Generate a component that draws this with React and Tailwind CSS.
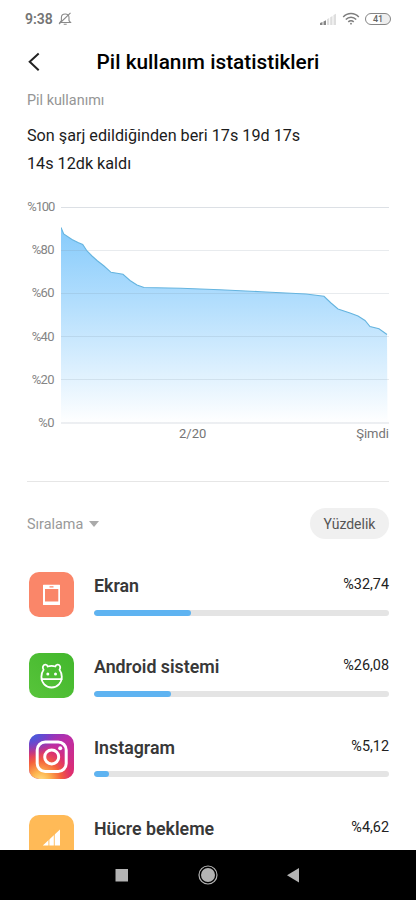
import React from "react";

const levels = ["%100", "%80", "%60", "%40", "%20", "%0"];

const linePoints =
  "0,20.5 2.7,27 11,32.5 17,35.5 21.7,37.5 26,44 31,49 36,53.5 43,59 50,65.3 62,67.3 69,73.5 76,78 83,80.5 120,81.3 159,82.7 200,84.7 245,87 263,89.3 270,96 277,102 289,106 297,109 304,113.5 309,119.5 318,121.7 326,127.5";

const ScreenIcon = () => (
  <svg viewBox="0 0 45 45" className="w-full h-full">
    <rect width="45" height="45" rx="10" fill="#fa8669" />
    <path
      fill="#fff"
      fillRule="evenodd"
      d="M14.5 12.7h16a.5.5 0 0 1 .5.5v19.200a.5.5 0 0 1-.5.5h-16a.5.500 0 0 1-.5-.5V13.200a.5.5 0 0 1 .5-.5zM16 17v12.5h13.3V17zM20.5 14.2v1.3h4v-1.3z"
    />
  </svg>
);

const AndroidIcon = () => (
  <svg viewBox="0 0 45 45" className="w-full h-full">
    <defs>
      <linearGradient id="green" x1="0" y1="1" x2="1" y2="0">
        <stop offset="0" stopColor="#58c43b" />
        <stop offset="1" stopColor="#42b72c" />
      </linearGradient>
    </defs>
    <rect width="45" height="45" rx="10" fill="url(#green)" />
    <g fill="none" stroke="#fff" strokeWidth="1.8" strokeLinecap="round" strokeLinejoin="round">
      <path d="M14.6 16.8c-1.600-2.300-.6-5 1.600-5.200 1.300-.1 2.200.6 2.500 1.900 2.500-.9 5.200-.9 7.700 0 .3-1.300 1.200-2 2.500-1.900 2.200.2 3.200 2.900 1.600 5.200 1.400 1.900 2.300 4.300 2.300 7 0 5.800-4.200 10.700-10.200 10.700s-10.200-4.900-10.200-10.700c0-2.700.8-5.100 2.200-7z" />
      <path d="M12.600 26.200h20" />
    </g>
    <circle cx="18.800" cy="20.900" r="1.500" fill="#fff" />
    <circle cx="26.500" cy="20.900" r="1.500" fill="#fff" />
  </svg>
);

const InstagramIcon = () => (
  <svg viewBox="0 0 45 45" className="w-full h-full">
    <defs>
      <linearGradient id="ig-base" x1="0.1" y1="0" x2="0.7" y2="1">
        <stop offset="0" stopColor="#6a3fd0" />
        <stop offset="0.4" stopColor="#bb2ea8" />
        <stop offset="1" stopColor="#dc2b73" />
      </linearGradient>
      <radialGradient id="ig-warm" cx="0.26" cy="1.05" r="0.92">
        <stop offset="0" stopColor="#ffe08a" />
        <stop offset="0.22" stopColor="#fdb650" />
        <stop offset="0.5" stopColor="#f4603b" />
        <stop offset="0.75" stopColor="#e0306a" stopOpacity="0.8" />
        <stop offset="1" stopColor="#c52d96" stopOpacity="0" />
      </radialGradient>
      <radialGradient id="ig-blue" cx="0.08" cy="0" r="0.5">
        <stop offset="0" stopColor="#4361dc" />
        <stop offset="1" stopColor="#5a49d8" stopOpacity="0" />
      </radialGradient>
    </defs>
    <rect width="45" height="45" rx="10" fill="url(#ig-base)" />
    <rect width="45" height="45" rx="10" fill="url(#ig-warm)" />
    <rect width="45" height="45" rx="10" fill="url(#ig-blue)" />
    <rect x="8.2" y="8" width="29" height="29.5" rx="8" fill="none" stroke="#fff" strokeWidth="3" />
    <circle cx="22.7" cy="22.9" r="7" fill="none" stroke="#fff" strokeWidth="3" />
    <circle cx="31.2" cy="14.2" r="2" fill="#fff" />
  </svg>
);

const CellIcon = () => (
  <svg viewBox="0 0 45 45" className="w-full h-full">
    <rect width="45" height="45" rx="10" fill="#ffba57" />
    <path fill="#fff" d="M13.8 30.5 31 14.5v16z" />
    <path stroke="#ffba57" strokeWidth="0.9" d="M19.9 14v17M25.3 14v17" />
  </svg>
);

const apps = [
  { name: "Ekran", percent: "%32,74", value: 32.74, icon: <ScreenIcon /> },
  { name: "Android sistemi", percent: "%26,08", value: 26.08, icon: <AndroidIcon /> },
  { name: "Instagram", percent: "%5,12", value: 5.12, icon: <InstagramIcon /> },
  { name: "Hücre bekleme", percent: "%4,62", value: 4.62, icon: <CellIcon /> },
];

function StatusBar() {
  return (
    <div className="h-9 shrink-0 flex items-center justify-between px-[25px] pt-[1px]">
      <div className="flex items-center gap-[5px]">
        <span className="text-[14px] leading-4 font-semibold text-[#757575]">9:38</span>
        <svg width="14" height="14" viewBox="0 0 14 14" fill="none" stroke="#8a8a8a" strokeWidth="1.1">
          <path d="M2 10.5h10.5L11 8.7V5.5C11 3.4 9.4 2 7.2 2S3.4 3.4 3.4 5.5v3.2z" />
          <path d="M5.7 12.3h3M1 12 12.500.8" />
        </svg>
      </div>
      <div className="flex items-center">
        <svg width="16" height="12" viewBox="0 0 16 12" className="mr-[6px]">
          <path fill="#858585" d="M0 12v-2l2.500-1v3zM3.500 12V8.500L6 7.200V12z" />
          <path fill="#dedede" d="M7 12V6.300L9.200 5v7zM10.200 12V4.300L12.500 3v9zM13.500 12V2L16 .8V12z" />
        </svg>
        <svg width="18" height="13" viewBox="0 0 18 13" fill="none" stroke="#7d7d7d" strokeWidth="1.5" className="mr-[5px]">
          <path d="M1.200 5c4.400-4.600 11.200-4.600 15.600 0M3.800 7.500c3-3.100 7.400-3.100 10.400 0M6.300 9.900c1.600-1.600 3.800-1.600 5.400 0" />
          <circle cx="9" cy="11.700" r="0.900" fill="#7d7d7d" stroke="none" />
        </svg>
        <div className="w-[26px] h-3 rounded-full border border-[#858585] bg-linear-to-r from-white from-60% to-[#eeeeee] to-60% flex items-center justify-center pt-px text-[9px] leading-none font-medium text-[#666]">
          41
        </div>
      </div>
    </div>
  );
}

function BatteryChart() {
  return (
    <div className="mt-[21px] pl-[20px] pr-[27px]">
      <div className="flex">
        <div className="w-[34px] h-[232px] flex flex-col justify-between text-right text-[13px] leading-4 tracking-[-0.6px] text-[#858585]">
          {levels.map((level) => (
            <span key={level} className="first:tracking-[-1.2px]">{level}</span>
          ))}
        </div>
        <svg width="328" height="218" viewBox="0 0 328 218" className="ml-[7px] mt-2">
          <defs>
            <linearGradient id="area" gradientUnits="userSpaceOnUse" x1="0" y1="20" x2="0" y2="216">
              <stop offset="0" stopColor="#86cbfb" />
              <stop offset="0.35" stopColor="#aedcfd" />
              <stop offset="0.75" stopColor="#dff1fe" />
              <stop offset="1" stopColor="#ffffff" />
            </linearGradient>
          </defs>
          <polygon points={`0,216 ${linePoints} 326.5,216`} fill="url(#area)" />
          {levels.map((level, i) => (
            <path
              key={level}
              d={`M0 ${[0.5, 43.5, 86.5, 129.5, 172.5, 216][i]}H328`}
              stroke="#78879b"
              strokeOpacity={i === 0 || i === 5 ? 0.26 : 0.17}
            />
          ))}
          <polyline points={linePoints} fill="none" stroke="#65b4df" strokeWidth="1.1" />
        </svg>
      </div>
      <div className="flex justify-between -mt-[5px] pl-[159px] text-[13px] leading-4 text-[#757575]">
        <span>2/20</span>
        <span>Şimdi</span>
      </div>
    </div>
  );
}

function AppRow({ app }) {
  return (
    <div className="h-[80.8px] shrink-0 flex pl-[28.5px] pr-[27px]">
      <div className="w-[45px] h-[45px] shrink-0">{app.icon}</div>
      <div className="flex-1 ml-[20.5px]">
        <div className="flex justify-between h-[37.5px]">
          <span className="pt-[4px] text-[17.8px] leading-5 font-semibold text-[#383838]">{app.name}</span>
          <span className="pt-[3px] text-[14.4px] leading-5 text-[#222]">{app.percent}</span>
        </div>
        <div className="h-[6px] rounded-full bg-[#e4e4e4] overflow-hidden">
          <div className="h-full rounded-full bg-[#5eb3f1]" style={{ width: `${app.value}%` }} />
        </div>
      </div>
    </div>
  );
}

export default function App() {
  return (
    <div className="w-[416px] h-[900px] overflow-hidden bg-white flex flex-col font-['Roboto',sans-serif]">
      <StatusBar />
      <header className="h-[52px] shrink-0 grid grid-cols-[80px_1fr_80px] items-center">
        <svg width="12" height="20" viewBox="0 0 12 20" fill="none" stroke="#222" strokeWidth="2" className="ml-[28px]">
          <path d="M10.7 1.500 1.700 9.800l9 8.500" />
        </svg>
        <h1 className="pt-[2px] text-center text-[20.8px] font-medium text-black whitespace-nowrap">Pil kullanım istatistikleri</h1>
      </header>

      <main className="flex-1 min-h-0 overflow-hidden flex flex-col">
        <p className="pl-[27px] mt-[3px] text-[14.4px] leading-5 text-[#959595]">Pil kullanımı</p>
        <p className="pl-[27px] mt-[11px] text-[16.2px] leading-7 text-[#1c1c1c]">
          Son şarj edildiğinden beri 17s 19d 17s
          <br />
          14s 12dk kaldı
        </p>

        <BatteryChart />

        <div className="mx-[27px] mt-[39px] h-px shrink-0 bg-[#e6e6e6]" />

        <div className="mt-[26px] h-[31px] shrink-0 px-[27px] flex items-center justify-between">
          <button className="pt-[2px] flex items-center gap-[6px] text-[14.4px] text-[#999]">
            Sıralama
            <svg width="10" height="6" viewBox="0 0 10 6">
              <path d="M0 0h10L5 6z" fill="#aaa" />
            </svg>
          </button>
          <button className="w-[79px] h-[31px] pt-px rounded-full bg-[#f0f0f0] text-[14px] text-[#555]">Yüzdelik</button>
        </div>

        <div className="mt-[33.300px]">
          {apps.map((app) => (
            <AppRow key={app.name} app={app} />
          ))}
        </div>
      </main>

      <nav className="h-[50px] shrink-0 bg-black flex items-center justify-center">
        <svg width="192" height="20" viewBox="0 0 192 20" className="-ml-[6px]">
          <rect x="6.5" y="4" width="12.5" height="12.5" fill="#b4b4b4" />
          <circle cx="99" cy="10" r="9" fill="none" stroke="#b4b4b4" strokeWidth="1.2" />
          <circle cx="99" cy="10" r="7" fill="#b4b4b4" />
          <path d="M178 10.2 190 3v14.4z" fill="#b4b4b4" />
        </svg>
      </nav>
    </div>
  );
}
